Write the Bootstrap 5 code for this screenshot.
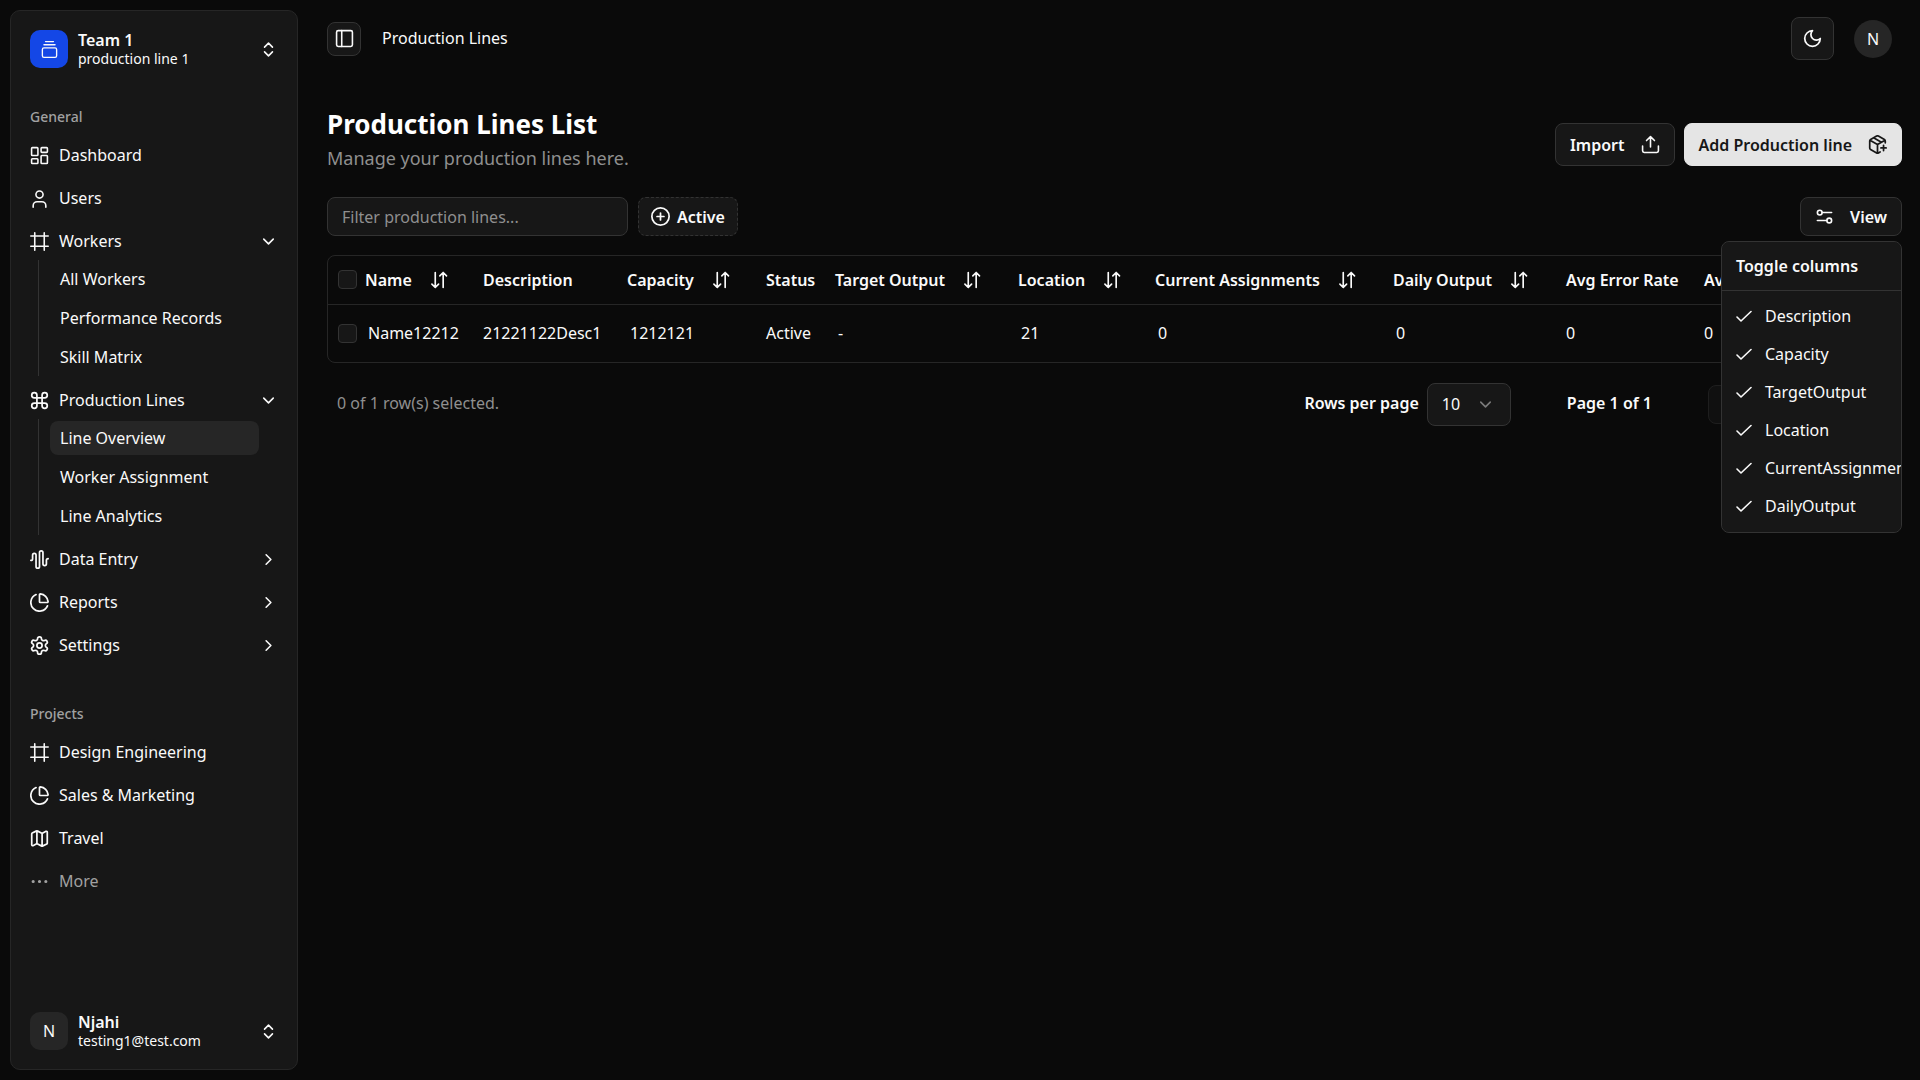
<!DOCTYPE html>
<html lang="en" data-bs-theme="dark">
<head>
<meta charset="utf-8">
<meta name="viewport" content="width=device-width, initial-scale=1">
<title>Production Lines</title>
<link rel="stylesheet" href="https://cdn.jsdelivr.net/npm/bootstrap@5.3.0/dist/css/bootstrap.min.css">
<style>
:root { --page: #0a0a0a; --panel: #171717; --accent: #262626; --edge: #262626; --edge-strong: #333333; --ink: #fafafa; --dim: #a1a1a1; --dimmer: #8f8f8f; }
body { background: var(--page); color: var(--ink); font-family: "Noto Sans", sans-serif; font-size: 16px; line-height: 24px; }
a { color: inherit; text-decoration: none; }
.ico { width: 19px; height: 19px; flex: none; fill: none; stroke: currentColor; stroke-width: 2; stroke-linecap: round; stroke-linejoin: round; }
.ico-thin { stroke-width: 1.7; }

/* Sidebar */
.side-wrap { width: 308px; height: 100vh; padding: 10px; position: sticky; top: 0; }
.side { background: var(--panel); border: 1px solid var(--edge); border-radius: 10px; padding: 9px; }
.side-user { width: 100%; padding: 10px; gap: 10px; border: 0; background: none; color: inherit; text-align: left; }
.side-user b { font-weight: 600; line-height: 20px; }
.side-user span span { font-size: 14px; line-height: 18px; }
.tile { width: 38px; height: 38px; border-radius: 10px; background: var(--accent); flex: none; }
.tile-brand { background: #1447e6; }
.side-label { height: 38px; padding: 0 10px; font-size: 14px; font-weight: 500; color: var(--dim); }
.side-nav { gap: 5px; }
.side-row { height: 38px; padding: 0 10px; gap: 10px; width: 100%; border: 0; background: none; color: inherit; border-radius: 8px; }
.side-row:hover { background: var(--accent); }
.side-row-dim { color: var(--dim); }
.side-sub { margin: 0 18px; padding: 2px 11px; gap: 5px; border-left: 1px solid var(--edge-strong); }
.side-sub a { height: 34px; padding: 0 10px; border-radius: 8px; }
.side-sub a.active { background: var(--accent); }
.side-general { margin-top: 20px; }
.side-projects { margin-top: 31px; }

/* Top bar */
.topbar { height: 77px; padding: 0 28px 0 19px; }
.crumb { margin-left: 21px; padding-bottom: 2px; }
.btn-line { --bs-btn-color: var(--ink); --bs-btn-bg: var(--panel); --bs-btn-border-color: var(--edge-strong); --bs-btn-hover-color: var(--ink); --bs-btn-hover-bg: var(--accent); --bs-btn-hover-border-color: #404040; --bs-btn-active-bg: var(--accent); --bs-btn-disabled-color: var(--ink); --bs-btn-disabled-bg: var(--panel); --bs-btn-disabled-border-color: var(--edge-strong); --bs-btn-disabled-opacity: .5; }
.btn-ui { height: 43px; padding: 0 14px; border-radius: 8px; font-size: 16px; font-weight: 600; line-height: 24px; }
.btn-sm-ui { height: 39px; }
.btn-square { width: 43px; padding: 0; }
.btn-mini { width: 34px; height: 34px; padding: 0; border-radius: 8px; }
.btn-solid { --bs-btn-color: #171717; --bs-btn-bg: #e5e5e5; --bs-btn-border-color: #e5e5e5; --bs-btn-hover-color: #171717; --bs-btn-hover-bg: #d4d4d4; --bs-btn-hover-border-color: #d4d4d4; }
.btn-dash { border-style: dashed; padding: 0 12px; gap: 7px; }
.gap-tool { gap: 10px; }
.gap-wide { gap: 20px; }

/* Page body */
.content { padding: 30px 18px 0 19px; }
.page-title { font-size: 26px; font-weight: 700; line-height: 34px; margin: 0 0 4px; }
.page-sub { font-size: 18px; line-height: 26px; color: var(--dimmer); margin: 0; }
.head-actions { padding-bottom: 5px; gap: 9px; }
.toolbar { margin-top: 26px; }
.filter-box { width: 301px; height: 39px; padding: 0 14px; font-size: 16px; border-radius: 8px; background: var(--panel); border-color: var(--edge-strong); color: var(--ink); }
.filter-box::placeholder { color: var(--dimmer); }

/* Column menu */
.menu-cols { --bs-dropdown-bg: var(--panel); --bs-dropdown-border-color: var(--edge-strong); --bs-dropdown-padding-y: 0; width: 181px; min-width: 0; top: 100%; right: 0; margin-top: 5px; border-radius: 8px; overflow: hidden; font-size: 16px; color: var(--ink); }
.menu-title { font-weight: 600; line-height: 48px; padding: 0 14px; border-bottom: 1px solid var(--edge-strong); }
.menu-list { padding: 6px 0 7px; }
.menu-list label { height: 38px; padding: 0 14px; gap: 13px; white-space: nowrap; }
.tick { appearance: none; width: 16px; height: 16px; margin: 0; flex: none; }
.tick:checked { background: url("data:image/svg+xml,%3Csvg xmlns='http://www.w3.org/2000/svg' viewBox='0 0 16 16' fill='none' stroke='%23fafafa' stroke-width='1.6' stroke-linecap='round' stroke-linejoin='round'%3E%3Cpath d='M1 9l4 4L15 3.500'/%3E%3C/svg%3E") center / contain no-repeat; }

/* Table */
.table-frame { margin-top: 19px; border: 1px solid var(--edge); border-radius: 8px; overflow: hidden; }
.grid-table { --bs-table-bg: transparent; --bs-table-color: var(--ink); --bs-table-border-color: var(--edge); table-layout: fixed; min-width: 1500px; margin: 0; white-space: nowrap; }
.grid-table th, .grid-table td { padding: 0 10px; vertical-align: middle; }
.grid-table th { height: 48px; font-weight: 600; }
.grid-table td { height: 58px; border-bottom: 0; }
.grid-table td.inset { padding-left: 13px; }
.sort-btn { border: 0; background: none; color: inherit; padding: 0; font-weight: 600; gap: 17px; }
.sort-btn .ico { width: 20px; height: 20px; }
.pick { width: 19px; height: 19px; margin: 0; background-color: var(--panel); border: 1px solid var(--edge-strong); border-radius: 5px; display: block; float: none; }
.c-pick { width: 27px; } .c-name { width: 118px; } .c-desc { width: 144px; } .c-cap { width: 139px; } .c-stat { width: 69px; } .c-target { width: 183px; } .c-loc { width: 137px; } .c-cur { width: 238px; } .c-daily { width: 173px; } .c-err { width: 138px; }

/* Pager */
.pager { margin-top: 20px; padding: 0 8px 0 10px; }
.pager-text { padding-bottom: 3px; }
.pager-note { color: var(--dimmer); }
.pager-size { width: 84px; height: 43px; padding: 0 14px 1px; font-size: 16px; border-radius: 8px; border-color: var(--edge-strong); color: var(--ink); background: var(--panel) url("data:image/svg+xml,%3Csvg xmlns='http://www.w3.org/2000/svg' viewBox='0 0 24 24' fill='none' stroke='%237a7a7a' stroke-width='2' stroke-linecap='round' stroke-linejoin='round'%3E%3Cpath d='m6 9 6 6 6-6'/%3E%3C/svg%3E") right 15px center / 19px 19px no-repeat; }
.pager-count { margin: 0 56px; }
.pager-btn { width: 39px; height: 39px; padding: 0; border-radius: 8px; }
</style>
<script src="https://cdn.jsdelivr.net/npm/bootstrap@5.3.0/dist/js/bootstrap.bundle.min.js" defer></script>
</head>
<body>
<svg class="d-none" aria-hidden="true">
  <symbol id="i-stack" viewBox="0 0 24 24"><path d="M7 2h10M5 6h14"/><rect width="18" height="12" x="3" y="10" rx="2"/></symbol>
  <symbol id="i-updown" viewBox="0 0 24 24"><path d="m7 15 5 5 5-5M7 9l5-5 5 5"/></symbol>
  <symbol id="i-down" viewBox="0 0 24 24"><path d="m6 9 6 6 6-6"/></symbol>
  <symbol id="i-right" viewBox="0 0 24 24"><path d="m9 18 6-6-6-6"/></symbol>
  <symbol id="i-left" viewBox="0 0 24 24"><path d="m15 18-6-6 6-6"/></symbol>
  <symbol id="i-first" viewBox="0 0 24 24"><path d="m11 17-5-5 5-5M18 17l-5-5 5-5"/></symbol>
  <symbol id="i-last" viewBox="0 0 24 24"><path d="m6 17 5-5-5-5M13 17l5-5-5-5"/></symbol>
  <symbol id="i-dash" viewBox="0 0 24 24"><rect width="8" height="10" x="2" y="2" rx="1"/><rect width="8" height="6" x="14" y="2" rx="1"/><rect width="8" height="10" x="14" y="12" rx="1"/><rect width="8" height="6" x="2" y="16" rx="1"/></symbol>
  <symbol id="i-user" viewBox="0 0 24 24"><path d="M20 23v-2a5 5 0 0 0-5-5H9a5 5 0 0 0-5 5v2"/><circle cx="12" cy="7" r="4.500"/></symbol>
  <symbol id="i-frame" viewBox="0 0 24 24"><path d="M23 5H1M23 18H1M6 1v22M18 1v22"/></symbol>
  <symbol id="i-command" viewBox="1 1 22 22"><path d="M15 6v12a3 3 0 1 0 3-3H6a3 3 0 1 0 3 3V6a3 3 0 1 0-3 3h12a3 3 0 1 0-3-3"/></symbol>
  <symbol id="i-wave" viewBox="1 1 22 22"><path d="M2 13a2 2 0 0 0 2-2V7a2 2 0 0 1 4 0v13a2 2 0 0 0 4 0V4a2 2 0 0 1 4 0v13a2 2 0 0 0 4 0v-4a2 2 0 0 1 2-2"/></symbol>
  <symbol id="i-pie" viewBox="1 1 22 22"><path d="M21 12c.552 0 1.005-.449.95-.998a10 10 0 0 0-8.953-8.951c-.55-.055-.998.398-.998.95v8a1 1 0 0 0 1 1z"/><path d="M21.210 15.890A10 10 0 1 1 8 2.830"/></symbol>
  <symbol id="i-gear" viewBox="1 1 22 22"><path d="M12.220 2h-.440a2 2 0 0 0-2 2v.180a2 2 0 0 1-1 1.730l-.430.250a2 2 0 0 1-2 0l-.150-.080a2 2 0 0 0-2.730.730l-.220.380a2 2 0 0 0 .730 2.730l.150.100a2 2 0 0 1 1 1.720v.510a2 2 0 0 1-1 1.740l-.150.090a2 2 0 0 0-.730 2.730l.220.380a2 2 0 0 0 2.730.730l.150-.080a2 2 0 0 1 2 0l.430.250a2 2 0 0 1 1 1.730V20a2 2 0 0 0 2 2h.440a2 2 0 0 0 2-2v-.180a2 2 0 0 1 1-1.730l.430-.250a2 2 0 0 1 2 0l.150.080a2 2 0 0 0 2.730-.730l.220-.390a2 2 0 0 0-.730-2.730l-.150-.080a2 2 0 0 1-1-1.740v-.500a2 2 0 0 1 1-1.740l.150-.090a2 2 0 0 0 .730-2.730l-.220-.380a2 2 0 0 0-2.730-.730l-.150.080a2 2 0 0 1-2 0l-.430-.250a2 2 0 0 1-1-1.730V4a2 2 0 0 0-2-2z"/><circle cx="12" cy="12" r="3"/></symbol>
  <symbol id="i-map" viewBox="1 1 22 22"><path d="M14.106 5.553a2 2 0 0 0 1.788 0l3.659-1.830A1 1 0 0 1 21 4.619v12.764a1 1 0 0 1-.553.894l-4.553 2.277a2 2 0 0 1-1.788 0l-4.212-2.106a2 2 0 0 0-1.788 0l-3.659 1.830A1 1 0 0 1 3 19.381V6.618a1 1 0 0 1 .553-.894l4.553-2.277a2 2 0 0 1 1.788 0zM15 5.764v15M9 3.236v15"/></symbol>
  <symbol id="i-more" viewBox="0 0 24 24"><circle cx="12" cy="12" r="1"/><circle cx="20" cy="12" r="1"/><circle cx="4" cy="12" r="1"/></symbol>
  <symbol id="i-panel" viewBox="0 0 24 24"><rect width="20" height="20" x="2" y="2" rx="2"/><path d="M8.500 2v20"/></symbol>
  <symbol id="i-moon" viewBox="1 1 22 22"><path d="M12 3a6 6 0 0 0 9 9 9 9 0 1 1-9-9Z"/></symbol>
  <symbol id="i-upload" viewBox="0 0 24 24"><path d="M22 14v6a2 2 0 0 1-2 2H4a2 2 0 0 1-2-2v-6M17 7l-5-5-5 5M12 2v13"/></symbol>
  <symbol id="i-box" viewBox="1 1 22 22"><path d="M16 16h6M19 13v6M21 10V8a2 2 0 0 0-1-1.730l-7-4a2 2 0 0 0-2 0l-7 4A2 2 0 0 0 3 8v8a2 2 0 0 0 1 1.730l7 4a2 2 0 0 0 2 0l2-1.140M7.500 4.270l9 5.150M3.290 7 12 12l8.710-5M12 22V12"/></symbol>
  <symbol id="i-plus" viewBox="1 1 22 22"><circle cx="12" cy="12" r="10"/><path d="M8 12h8M12 8v8"/></symbol>
  <symbol id="i-sliders" viewBox="0 0 24 24"><path d="M21 7H9M15 17H3"/><circle cx="18" cy="17" r="3"/><circle cx="6" cy="7" r="3"/></symbol>
  <symbol id="i-sort" viewBox="0 0 24 24"><path d="M7.500 3v18M3.500 17l4 4 4-4M17 21V3M13 7l4-4 4 4"/></symbol>
</svg>

<div class="d-flex min-vh-100">
  <div class="side-wrap flex-shrink-0">
    <aside class="side d-flex flex-column h-100">
      <button class="side-user d-flex align-items-center" type="button">
        <span class="tile tile-brand d-flex align-items-center justify-content-center"><svg class="ico ico-thin"><use href="#i-stack"/></svg></span>
        <span class="d-flex flex-column flex-grow-1"><b>Team 1</b><span>production line 1</span></span>
        <svg class="ico"><use href="#i-updown"/></svg>
      </button>

      <div class="side-general">
        <div class="side-label d-flex align-items-center">General</div>
        <nav class="side-nav d-flex flex-column" aria-label="General">
          <a class="side-row d-flex align-items-center" href="#"><svg class="ico"><use href="#i-dash"/></svg>Dashboard</a>
          <a class="side-row d-flex align-items-center" href="#"><svg class="ico"><use href="#i-user"/></svg>Users</a>
          <div>
            <button class="side-row d-flex align-items-center" type="button" aria-expanded="true"><svg class="ico"><use href="#i-frame"/></svg>Workers<svg class="ico ms-auto"><use href="#i-down"/></svg></button>
            <div class="side-sub d-flex flex-column">
              <a class="d-flex align-items-center" href="#">All Workers</a>
              <a class="d-flex align-items-center" href="#">Performance Records</a>
              <a class="d-flex align-items-center" href="#">Skill Matrix</a>
            </div>
          </div>
          <div>
            <button class="side-row d-flex align-items-center" type="button" aria-expanded="true"><svg class="ico"><use href="#i-command"/></svg>Production Lines<svg class="ico ms-auto"><use href="#i-down"/></svg></button>
            <div class="side-sub d-flex flex-column">
              <a class="active d-flex align-items-center" href="#" aria-current="page">Line Overview</a>
              <a class="d-flex align-items-center" href="#">Worker Assignment</a>
              <a class="d-flex align-items-center" href="#">Line Analytics</a>
            </div>
          </div>
          <button class="side-row d-flex align-items-center" type="button"><svg class="ico"><use href="#i-wave"/></svg>Data Entry<svg class="ico ms-auto"><use href="#i-right"/></svg></button>
          <button class="side-row d-flex align-items-center" type="button"><svg class="ico"><use href="#i-pie"/></svg>Reports<svg class="ico ms-auto"><use href="#i-right"/></svg></button>
          <button class="side-row d-flex align-items-center" type="button"><svg class="ico"><use href="#i-gear"/></svg>Settings<svg class="ico ms-auto"><use href="#i-right"/></svg></button>
        </nav>
      </div>

      <div class="side-projects">
        <div class="side-label d-flex align-items-center">Projects</div>
        <nav class="side-nav d-flex flex-column" aria-label="Projects">
          <a class="side-row d-flex align-items-center" href="#"><svg class="ico"><use href="#i-frame"/></svg>Design Engineering</a>
          <a class="side-row d-flex align-items-center" href="#"><svg class="ico"><use href="#i-pie"/></svg>Sales &amp; Marketing</a>
          <a class="side-row d-flex align-items-center" href="#"><svg class="ico"><use href="#i-map"/></svg>Travel</a>
          <button class="side-row side-row-dim d-flex align-items-center" type="button"><svg class="ico"><use href="#i-more"/></svg>More</button>
        </nav>
      </div>

      <button class="side-user d-flex align-items-center mt-auto" type="button">
        <span class="tile d-flex align-items-center justify-content-center">N</span>
        <span class="d-flex flex-column flex-grow-1"><b>Njahi</b><span>testing1@test.com</span></span>
        <svg class="ico"><use href="#i-updown"/></svg>
      </button>
    </aside>
  </div>

  <main class="flex-fill overflow-hidden">
    <header class="topbar d-flex align-items-center">
      <button class="btn btn-line btn-mini d-flex align-items-center justify-content-center" type="button" aria-label="Toggle sidebar"><svg class="ico"><use href="#i-panel"/></svg></button>
      <span class="crumb">Production Lines</span>
      <div class="d-flex align-items-center gap-wide ms-auto">
        <button class="btn btn-line btn-ui btn-square d-flex align-items-center justify-content-center" type="button" aria-label="Theme"><svg class="ico"><use href="#i-moon"/></svg></button>
        <span class="tile rounded-circle d-flex align-items-center justify-content-center">N</span>
      </div>
    </header>

    <div class="content">
      <div class="d-flex justify-content-between align-items-end">
        <div>
          <h1 class="page-title">Production Lines List</h1>
          <p class="page-sub">Manage your production lines here.</p>
        </div>
        <div class="head-actions d-flex">
          <button class="btn btn-line btn-ui d-flex align-items-center gap-3" type="button">Import<svg class="ico"><use href="#i-upload"/></svg></button>
          <button class="btn btn-solid btn-ui d-flex align-items-center gap-3" type="button">Add Production line<svg class="ico"><use href="#i-box"/></svg></button>
        </div>
      </div>

      <div class="toolbar d-flex justify-content-between">
        <div class="d-flex gap-tool">
          <input class="form-control filter-box" type="text" placeholder="Filter production lines..." aria-label="Filter production lines">
          <button class="btn btn-line btn-ui btn-sm-ui btn-dash d-flex align-items-center" type="button"><svg class="ico"><use href="#i-plus"/></svg>Active</button>
        </div>
        <div class="dropdown">
          <button class="btn btn-line btn-ui btn-sm-ui d-flex align-items-center gap-3" type="button" aria-expanded="true"><svg class="ico"><use href="#i-sliders"/></svg>View</button>
          <div class="dropdown-menu menu-cols show">
            <div class="menu-title">Toggle columns</div>
            <div class="menu-list">
              <label class="d-flex align-items-center"><input class="tick" type="checkbox" checked>Description</label>
              <label class="d-flex align-items-center"><input class="tick" type="checkbox" checked>Capacity</label>
              <label class="d-flex align-items-center"><input class="tick" type="checkbox" checked>TargetOutput</label>
              <label class="d-flex align-items-center"><input class="tick" type="checkbox" checked>Location</label>
              <label class="d-flex align-items-center"><input class="tick" type="checkbox" checked>CurrentAssignments</label>
              <label class="d-flex align-items-center"><input class="tick" type="checkbox" checked>DailyOutput</label>
            </div>
          </div>
        </div>
      </div>

      <div class="table-frame">
        <table class="table grid-table">
          <colgroup><col class="c-pick"><col class="c-name"><col class="c-desc"><col class="c-cap"><col class="c-stat"><col class="c-target"><col class="c-loc"><col class="c-cur"><col class="c-daily"><col class="c-err"><col></colgroup>
          <thead>
            <tr>
              <th class="pe-0"><input class="form-check-input pick" type="checkbox" aria-label="Select all"></th>
              <th><button class="sort-btn d-flex align-items-center" type="button">Name<svg class="ico"><use href="#i-sort"/></svg></button></th>
              <th>Description</th>
              <th><button class="sort-btn d-flex align-items-center" type="button">Capacity<svg class="ico"><use href="#i-sort"/></svg></button></th>
              <th>Status</th>
              <th><button class="sort-btn d-flex align-items-center" type="button">Target Output<svg class="ico"><use href="#i-sort"/></svg></button></th>
              <th><button class="sort-btn d-flex align-items-center" type="button">Location<svg class="ico"><use href="#i-sort"/></svg></button></th>
              <th><button class="sort-btn d-flex align-items-center" type="button">Current Assignments<svg class="ico"><use href="#i-sort"/></svg></button></th>
              <th><button class="sort-btn d-flex align-items-center" type="button">Daily Output<svg class="ico"><use href="#i-sort"/></svg></button></th>
              <th>Avg Error Rate</th>
              <th>Avg Efficiency</th>
            </tr>
          </thead>
          <tbody>
            <tr>
              <td class="pe-0"><input class="form-check-input pick" type="checkbox" aria-label="Select row"></td>
              <td class="inset">Name12212</td>
              <td>21221122Desc1</td>
              <td class="inset">1212121</td>
              <td>Active</td>
              <td class="inset">-</td>
              <td class="inset">21</td>
              <td class="inset">0</td>
              <td class="inset">0</td>
              <td>0</td>
              <td>0</td>
            </tr>
          </tbody>
        </table>
      </div>

      <div class="pager d-flex align-items-center">
        <span class="pager-text pager-note">0 of 1 row(s) selected.</span>
        <label class="pager-text fw-semibold ms-auto me-2" for="rows">Rows per page</label>
        <select class="form-select pager-size" id="rows"><option>10</option><option>20</option><option>50</option></select>
        <span class="pager-text pager-count fw-semibold">Page 1 of 1</span>
        <div class="d-flex gap-tool">
          <button class="btn btn-line pager-btn d-flex align-items-center justify-content-center" type="button" disabled aria-label="First page"><svg class="ico"><use href="#i-first"/></svg></button>
          <button class="btn btn-line pager-btn d-flex align-items-center justify-content-center" type="button" disabled aria-label="Previous page"><svg class="ico"><use href="#i-left"/></svg></button>
          <button class="btn btn-line pager-btn d-flex align-items-center justify-content-center" type="button" disabled aria-label="Next page"><svg class="ico"><use href="#i-right"/></svg></button>
          <button class="btn btn-line pager-btn d-flex align-items-center justify-content-center" type="button" disabled aria-label="Last page"><svg class="ico"><use href="#i-last"/></svg></button>
        </div>
      </div>
    </div>
  </main>
</div>
</body>
</html>
